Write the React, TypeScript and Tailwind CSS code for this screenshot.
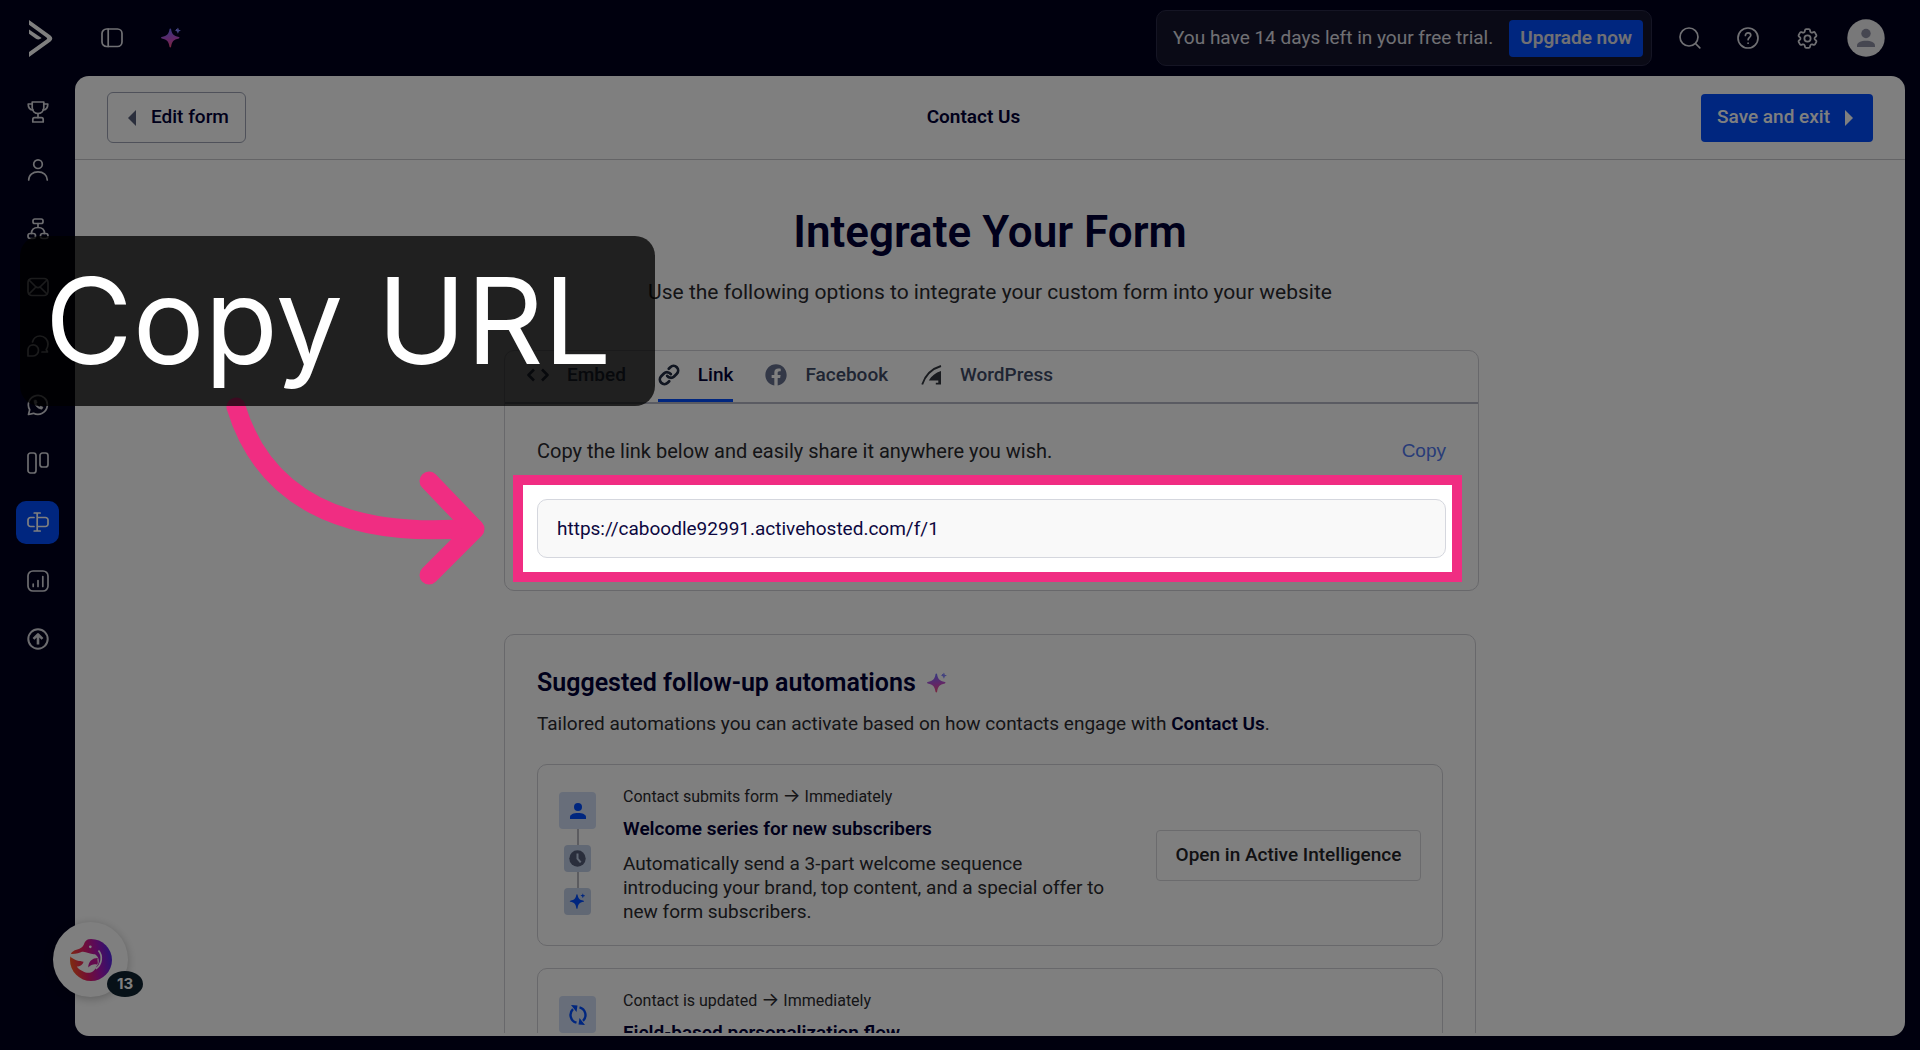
import type { ReactNode } from "react";
import clsx from "clsx";
import { FaFacebook } from "react-icons/fa";
import { HiOutlineCog6Tooth } from "react-icons/hi2";

const Icon = ({ children, size = 22 }: { children: ReactNode; size?: number }) => (
    <svg width={size} height={size} viewBox="0 0 22 22" fill="none" stroke="currentColor" strokeWidth={1.7} strokeLinecap="round" strokeLinejoin="round" aria-hidden="true">
        {children}
    </svg>
);

const navItems = [
    {
        label: "Get started",
        icon: (
            <Icon>
                <path d="M5.2 1h11.6v5.5c0 3.6-2.6 6-5.8 6s-5.8-2.4-5.8-6z" />
                <path d="M5.2 3H1.2c0 3.6 1.6 6 5 6M16.8 3h4c0 3.6-1.6 6-5 6M11 12.5v4" />
                <path d="M7.5 16.7h7c1.2 0 1.7.8 1.7 2V21H5.8v-2.3c0-1.2.5-2 1.7-2z" />
            </Icon>
        ),
    },
    {
        label: "Contacts",
        icon: (
            <Icon>
                <circle cx="11" cy="5.2" r="4.3" />
                <path d="M1.7 21c0-5 4-8.2 9.3-8.2s9.3 3.2 9.3 8.2" />
            </Icon>
        ),
    },
    {
        label: "Automations",
        icon: (
            <Icon>
                <rect x="6" y="1" width="10" height="4.5" rx="1.8" />
                <rect x="1" y="15.5" width="7.5" height="5" rx="2.2" />
                <rect x="13.5" y="15.5" width="7.5" height="5" rx="2.2" />
                <path d="M11 5.5v4M4.500 15.5c0-3.5 2-6 6.500-6s6.500 2.500 6.500 6" />
            </Icon>
        ),
    },
    {
        label: "Campaigns",
        icon: (
            <Icon>
                <rect x="1" y="2.5" width="20" height="17" rx="4" />
                <path d="M2 4l6.500 6.500c1.500 1.300 3.500 1.300 5 0L20 4M2 18l6-6M20 18l-6-6" />
            </Icon>
        ),
    },
    {
        label: "Conversations",
        icon: (
            <Icon>
                <path d="M5.500 7C6.500 3.500 9.500 1 13 1c4.500 0 8 3.500 8 8 0 2.500-.8 4.200-1.800 5.500L20.500 17H15" />
                <path d="M1 21v-6c0-3 2.300-5.200 5.200-5.200s5.300 2.400 5.300 5.400S9.200 21 6.200 21z" />
            </Icon>
        ),
    },
    {
        label: "WhatsApp",
        icon: (
            <Icon>
                <path d="M1.500 20.500l1.200-4.800A9.500 9.500 0 1 1 6.500 19.300z" />
                <path d="M7 7c0 4 3.500 8 8 8.200l1-2-2.400-1.300-1.200 1c-1.600-.8-2.600-1.800-3.200-3.200l1-1.200-1-2.500H7.700z" fill="currentColor" strokeWidth={0.5} />
            </Icon>
        ),
    },
    {
        label: "Deals",
        icon: (
            <Icon>
                <rect x="1" y="1" width="8" height="20" rx="2.5" />
                <rect x="13" y="1" width="8" height="14" rx="2.5" />
            </Icon>
        ),
    },
    {
        label: "Forms",
        active: true,
        icon: (
            <Icon>
                <path d="M7 6.500H3.500A2.500 2.500 0 0 0 1 9v4a2.500 2.500 0 0 0 2.500 2.500H7M10.200 6.500h8.300A2.500 2.500 0 0 1 21 9v4a2.500 2.500 0 0 1-2.500 2.500h-8.300M10.200 2v18M7.200 2h6M7.200 20h6" />
            </Icon>
        ),
    },
    {
        label: "Reports",
        icon: (
            <Icon>
                <rect x="1" y="1" width="20" height="20" rx="5" />
                <path d="M6.200 14v2.500M11 10.500v6M15.800 6.500v10" />
            </Icon>
        ),
    },
    {
        label: "Upgrade",
        icon: (
            <Icon>
                <circle cx="11" cy="11" r="9.7" strokeWidth={2} />
                <path d="M11 16.500V6.500M6.500 10.800L11 6.300l4.500 4.500" strokeWidth={2.6} strokeLinecap="butt" />
            </Icon>
        ),
    },
];

function Sparkle({ size = 22, id }: { size?: number; id?: string }) {
    const fill = id ? `url(#${id})` : "currentColor";
    return (
        <svg width={size} height={size} viewBox="0 0 22 22" fill={fill} aria-hidden="true">
            {id && (
                <defs>
                    <linearGradient id={id} x1="8" y1="0" x2="12" y2="22" gradientUnits="userSpaceOnUse">
                        <stop offset="0.1" stopColor="#7070ff" />
                        <stop offset="0.55" stopColor="#c24fd0" />
                        <stop offset="1" stopColor="#ff4f6a" />
                    </linearGradient>
                </defs>
            )}
            <path d="M10.300 1.500c.5 0 .7.300.8.800.8 4.800 2.300 6.500 7.800 7.700.8.200.8 1.200 0 1.400-5.500 1.200-7 3-7.800 8.300-.2 1-1.400 1-1.600 0-.8-5.300-2.300-7.100-7.800-8.300-.9-.2-.9-1.200 0-1.400 5.500-1.200 7-2.900 7.800-7.700.1-.5.3-.8.800-.8z" />
            <path d="M17.900.8c.5 0 .6 1.600.9 1.900.3.300 1.900.4 1.900.9s-1.600.6-1.900.9c-.3.300-.4 1.900-.9 1.900s-.6-1.600-.9-1.900c-.3-.3-1.900-.4-1.900-.9s1.600-.6 1.900-.9c.3-.3.4-1.900.9-1.900z" fill={id ? "#8886ff" : "currentColor"} />
        </svg>
    );
}

function TopBar() {
    return (
        <header className="flex h-[76px] shrink-0 items-center pr-[35px] text-[#e1e1e8]">
            <a href="#home" aria-label="Home" className="ml-[29px]">
                <svg width="24" height="37" viewBox="0 0 24 37" fill="#fff" aria-hidden="true">
                    <path d="M0 0v4.800L17.500 17.500a1.200 1.200 0 0 1 0 2L0 32v5l21.500-15.500c2.400-1.700 2.400-4.300 0-6z" />
                    <path d="M0 9.500v4.300l6.600 4.700c2 1.400 4 1.300 6-.4z" />
                </svg>
            </a>
            <button aria-label="Toggle sidebar" className="ml-12">
                <Icon>
                    <rect x="1" y="2" width="20" height="17.5" rx="4.5" />
                    <path d="M7.200 2v17.500" />
                </Icon>
            </button>
            <button aria-label="Active Intelligence" className="ml-[37px]">
                <Sparkle id="spark-top" />
            </button>
            <div className="ml-auto flex h-14 items-center gap-4 rounded-[10px] border border-[#2a2a48] bg-[#14142c] pr-2 pl-4 text-[19px]">
                <p>You have 14 days left in your free trial.</p>
                <button className="h-[37px] rounded bg-[#004cff] px-[11px] font-semibold">Upgrade now</button>
            </div>
            <div className="mx-[27px] flex items-center gap-9">
                <button aria-label="Search">
                    <Icon>
                        <circle cx="10" cy="10" r="9" />
                        <path d="M16.500 16.500l4.300 4.300" />
                    </Icon>
                </button>
                <button aria-label="Help">
                    <Icon>
                        <circle cx="11" cy="11" r="10" />
                        <path d="M8.400 8.500c0-1.700 1.200-2.700 2.700-2.700s2.700 1 2.700 2.500c0 2-2.700 2.100-2.700 4.400M11.100 16v.2" />
                    </Icon>
                </button>
                <button aria-label="Settings">
                    <HiOutlineCog6Tooth size={25} strokeWidth={1.7} />
                </button>
            </div>
            <button aria-label="Account">
                <svg width="38" height="38" viewBox="0 0 38 38" aria-hidden="true">
                    <circle cx="19" cy="19" r="18.7" fill="#f0f0f2" />
                    <circle cx="19" cy="14.5" r="4.7" fill="#8d8ea3" />
                    <path d="M10 28v-1.500c0-3 4-4.800 9-4.800s9 1.800 9 4.800V28z" fill="#8d8ea3" />
                </svg>
            </button>
        </header>
    );
}

function Sidebar() {
    return (
        <nav className="w-[75px] shrink-0 pt-[14px]">
            <ul className="flex h-[571px] flex-col items-center justify-between">
                {navItems.map((item) => (
                    <li key={item.label}>
                        <a
                            href="#nav"
                            aria-label={item.label}
                            className={clsx("flex size-[43px] items-center justify-center rounded-[10px]", item.active ? "bg-[#004cff] text-white" : "text-[#d9d9df]")}
                        >
                            {item.icon}
                        </a>
                    </li>
                ))}
            </ul>
        </nav>
    );
}

const tabs = [
    {
        label: "Embed",
        icon: (
            <Icon>
                <path d="M7 5.500L1.500 11 7 16.500M15 5.500l5.500 5.500-5.500 5.500" strokeWidth={2.6} strokeLinecap="butt" />
            </Icon>
        ),
    },
    {
        label: "Link",
        active: true,
        icon: (
            <svg width="22" height="22" viewBox="0 0 24 24" fill="none" stroke="#232c42" strokeWidth={3} strokeLinecap="round" strokeLinejoin="round" aria-hidden="true">
                <path d="M10 13a5 5 0 0 0 7.540.54l3-3a5 5 0 0 0-7.070-7.070l-1.720 1.710" />
                <path d="M14 11a5 5 0 0 0-7.540-.54l-3 3a5 5 0 0 0 7.070 7.070l1.710-1.710" />
            </svg>
        ),
    },
    { label: "Facebook", icon: <FaFacebook size={22} color="#66708e" /> },
    {
        label: "WordPress",
        icon: (
            <svg width="22" height="22" viewBox="0 0 22 22" aria-hidden="true">
                <path d="M2.200 20.500C5 12 11 5 21 2" fill="none" stroke="#33373f" strokeWidth={1.9} />
                <path d="M21 7v13.500h-5.200v-1.700h2.500v-2.300H8.800C11.500 12 15.500 8.500 21 7z" fill="#33373f" />
            </svg>
        ),
    },
];

function LinkCard() {
    return (
        <section className="-mr-[3px] rounded-[10px] border border-[#d0d0d6]">
            <div role="tablist" className="flex h-[53px] gap-8 border-b-2 border-[#b4b6c4] pl-[22px]">
                {tabs.map((tab) => (
                    <button
                        key={tab.label}
                        role="tab"
                        aria-selected={!!tab.active}
                        className={clsx(
                            "flex items-center gap-[18px] border-b-3 text-[19px] font-medium",
                            tab.active ? "border-[#004cff] text-[#000036]" : "border-transparent text-[#3f4b66]"
                        )}
                    >
                        {tab.icon}
                        {tab.label}
                    </button>
                ))}
            </div>
            <div className="px-8 pt-[35px] pb-8">
                <div className="flex items-center justify-between leading-6">
                    <label htmlFor="form-url" className="text-xl leading-6 text-[#2a2a2e]">
                        Copy the link below and easily share it anywhere you wish.
                    </label>
                    <button className="font-['Liberation_Sans',sans-serif] text-[19px] text-[#5179f0]">Copy</button>
                </div>
                <input
                    id="form-url"
                    readOnly
                    value="https://caboodle92991.activehosted.com/f/1"
                    className="mt-9 block h-[59px] w-full rounded-[10px] border border-[#d5d7de] bg-[#f9f9f9] px-[19px] text-[19px] text-[#0d0840]"
                />
            </div>
        </section>
    );
}

function Connector() {
    return <span className="h-4 w-0.5 bg-[#b9b9c0]" />;
}

function Automation({ trigger, title, icon, children, steps }: { trigger: string; title: string; icon: ReactNode; children?: ReactNode; steps?: ReactNode }) {
    return (
        <article className="flex min-h-[182px] rounded-[10px] border border-[#d0d0d6] px-[21px]">
            <div className="flex w-[37px] flex-col items-center pt-[27px] text-[#004cff]">
                <span className="flex size-[37px] items-center justify-center rounded bg-[#d0ddf5]">{icon}</span>
                {steps}
            </div>
            <div className="ml-[27px] flex-1 pt-[21px]">
                <p className="text-base leading-5 text-[#2a2a2e]">
                    {trigger} <span className="font-['Inter',sans-serif] text-[19px] leading-none">→</span> Immediately
                </p>
                <h3 className="mt-[10px] text-[19px] leading-6 font-semibold text-[#000036]">{title}</h3>
                {children}
            </div>
            <button className="ml-12 h-[51px] w-[265px] self-center rounded border border-[#d6d6da] text-[19px] font-medium text-[#222226]">
                Open in Active Intelligence
            </button>
        </article>
    );
}

function SuggestedAutomations() {
    return (
        <section className="mt-[43px] rounded-[10px] border border-[#d0d0d6] p-8">
            <h2 className="flex items-center gap-[10px] text-[25px] leading-8 font-semibold text-[#000036]">
                Suggested follow-up automations
                <Sparkle id="spark-title" />
            </h2>
            <p className="mt-[13px] text-[19px] leading-6 text-[#2a2a2e]">
                Tailored automations you can activate based on how contacts engage with <strong className="font-semibold text-[#000036]">Contact Us</strong>.
            </p>
            <div className="mt-7 flex flex-col gap-[22px]">
                <Automation
                    trigger="Contact submits form"
                    title="Welcome series for new subscribers"
                    icon={
                        <svg width="18" height="18" viewBox="0 0 18 18" fill="currentColor" aria-hidden="true">
                            <circle cx="9" cy="5" r="4" />
                            <path d="M1 17v-2c0-2.500 3.500-4 8-4s8 1.500 8 4v2z" />
                        </svg>
                    }
                    steps={
                        <>
                            <Connector />
                            <span className="flex size-[27px] items-center justify-center rounded bg-[#c3d0e8]">
                                <svg width="17" height="17" viewBox="0 0 17 17" aria-hidden="true">
                                    <circle cx="8.5" cy="8.5" r="8.2" fill="#555d78" />
                                    <path d="M8.500 3.500v5.200l3.200 3.600" fill="none" stroke="#c3d0e8" strokeWidth={2} />
                                </svg>
                            </span>
                            <Connector />
                            <span className="flex size-[27px] items-center justify-center rounded bg-[#c3d0e8]">
                                <Sparkle size={17} />
                            </span>
                        </>
                    }
                >
                    <p className="mt-[11px] text-[19px] leading-6 text-[#2a2a2e]">
                        Automatically send a 3-part welcome sequence introducing your brand, top content, and a special offer to new form subscribers.
                    </p>
                </Automation>
                <Automation
                    trigger="Contact is updated"
                    title="Field-based personalization flow"
                    icon={
                        <svg width="20" height="22" viewBox="0 0 20 22" fill="none" stroke="currentColor" strokeWidth={2.4} aria-hidden="true">
                            <path d="M8.500 18.700A8 8 0 0 1 5 5.200M11.500 3.300A8 8 0 0 1 15 16.800" />
                            <path d="M3 1l6.500.5L8.500 8zM17 21l-6.500-.5L11.500 14z" fill="currentColor" stroke="none" />
                        </svg>
                    }
                />
            </div>
        </section>
    );
}

function HelpWidget() {
    return (
        <button aria-label="Getting started, 13 tasks" className="absolute bottom-[53px] left-[53px] flex size-[75px] items-center justify-center rounded-full bg-white shadow-[0_2px_10px_rgba(0,0,0,0.25)]">
            <svg width="42" height="42" viewBox="0 0 124 124" aria-hidden="true">
                <defs>
                    <linearGradient id="dolphin" x1="0" y1="70" x2="124" y2="50" gradientUnits="userSpaceOnUse">
                        <stop offset="0" stopColor="#ff5a1e" />
                        <stop offset="0.35" stopColor="#e81e64" />
                        <stop offset="0.65" stopColor="#b414b4" />
                        <stop offset="1" stopColor="#5028e6" />
                    </linearGradient>
                </defs>
                <circle cx="62" cy="62" r="62" fill="url(#dolphin)" />
                <path d="M-4 46L14 33c14-3 24-8 28-20 3-7 8-11 14-15H-6z" fill="#fff" />
                <path d="M-2 44c8 0 22 0 34-5 14-5 26 8 42 6 14 10 14 26 4 36-6 18-24 24-40 14-8-3-14-8-18-14 10 0 18-6 20-14-10 0-28-4-40-16z" fill="#fff" />
                <path d="M54 84c0-18 12-28 28-28-3 8 3 12-2 20-8-3-18 0-26 8z" fill="#c8149a" />
                <path d="M84 34c14 16 10 42-8 54" fill="none" stroke="#fff" strokeWidth="5" />
                <circle cx="60" cy="23" r="4" fill="#fff" />
            </svg>
            <span className="absolute -right-[15px] bottom-0 flex h-[26px] w-9 items-center justify-center rounded-[50%] bg-[#0e2230] font-['Inter',sans-serif] text-[15px] font-bold text-white">13</span>
        </button>
    );
}

/* Tutorial step: dims the page around the URL field and points at it */
function Walkthrough() {
    return (
        <div className="pointer-events-none absolute inset-0">
            <div className="absolute top-[475px] left-[calc(50%-447px)] h-[107px] w-[949px] border-[10px] border-[#f02d82] shadow-[0_0_0_4000px_rgba(0,0,0,0.5)]" />
            <svg className="absolute top-[390px] left-[calc(50%-740px)]" width="280" height="210" viewBox="220 390 280 210" fill="none" stroke="#f02d82" strokeWidth="19" strokeLinecap="round" strokeLinejoin="round" aria-hidden="true">
                <path d="M236 407C262 492 335 540 474 528" />
                <path d="M429 481l46 48-46 46" />
            </svg>
            <p className="absolute top-[236px] left-5 w-[635px] rounded-[20px] bg-black/75 pl-[25px] font-['Inter',sans-serif] text-[120px] leading-[170px] text-white">Copy URL</p>
        </div>
    );
}

export default function App() {
    return (
        <div className="relative flex h-screen flex-col overflow-hidden bg-[#00001c] font-['Roboto',sans-serif]">
            <TopBar />
            <div className="flex min-h-0 flex-1">
                <Sidebar />
                <main className="mr-[15px] mb-[14px] flex flex-1 flex-col overflow-hidden rounded-[14px] bg-white pb-[3px]">
                    <div className="flex h-[84px] shrink-0 items-center justify-between border-b border-[#c8c8cc] px-8 text-[19px] text-[#000036]">
                        <button className="flex h-[51px] items-center gap-[15px] rounded-md border border-[#9ea3b4] pr-4 pl-5 font-medium">
                            <svg width="8" height="16" viewBox="0 0 8 16" fill="#555d78" aria-hidden="true"><path d="M8 0v16L0 8z" /></svg>
                            Edit form
                        </button>
                        <h1 className="font-semibold">Contact Us</h1>
                        <button className="flex h-12 items-center gap-[15px] rounded bg-[#004cff] pr-5 pl-4 font-medium text-white">
                            Save and exit
                            <svg width="8" height="16" viewBox="0 0 8 16" fill="currentColor" aria-hidden="true"><path d="M0 0v16l8-8z" /></svg>
                        </button>
                    </div>
                    <div className="min-h-0 flex-1 overflow-hidden">
                        <div className="mx-auto w-[972px] max-w-full pt-[46px]">
                            <h2 className="text-center text-[44px] leading-[52px] font-semibold text-[#000036]">Integrate Your Form</h2>
                            <p className="mt-[18px] mb-[42px] text-center text-[21px] leading-8 text-[#2a2a2e]">
                                Use the following options to integrate your custom form into your website
                            </p>
                            <LinkCard />
                            <SuggestedAutomations />
                        </div>
                    </div>
                </main>
            </div>
            <HelpWidget />
            <Walkthrough />
        </div>
    );
}
